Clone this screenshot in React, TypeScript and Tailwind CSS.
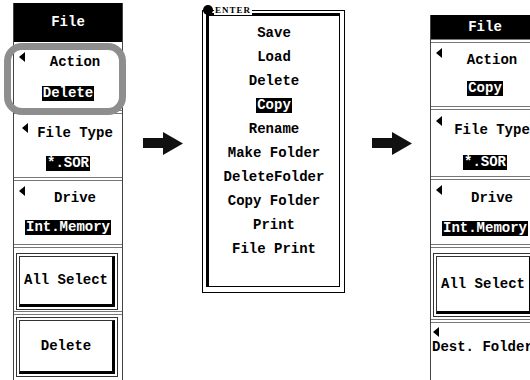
const mono = "font-['Liberation_Mono',monospace] font-bold text-[14px] text-black";

const Tri = ({ className }: { className: string }) => (
  <svg width="6" height="10" viewBox="0 0 6 10" className={`absolute ${className}`}>
    <polygon points="6,0 0,5 6,10" fill="#000" />
  </svg>
);

const Sep = () => <div className="h-[4px] shrink-0 border-y border-[#777]" />;

const Value = ({ text }: { text: string }) => (
  <div className="flex justify-center">
    <span className="bg-black text-white px-[1px] leading-[15px]">{text}</span>
  </div>
);

const Arrow = ({ className }: { className: string }) => (
  <svg width="40" height="23" viewBox="0 0 40 23" className={`shrink-0 ${className}`}>
    <rect x="0" y="6" width="21" height="10" fill="#111" />
    <polygon points="20,0 40,11.5 20,23" fill="#111" />
  </svg>
);

const BevelButton = ({ label, className }: { label: string; className: string }) => (
  <div className={`border border-[#333] p-[2px] flex ${className}`}>
    <div className="flex-1 flex items-center justify-center border-t border-l border-[#333] border-r-[3px] border-b-[3px] border-r-black border-b-black">
      {label}
    </div>
  </div>
);

const LeftPanel = () => (
  <div className="ml-[13px] mt-[3px] w-[110px] h-[377px] shrink-0 flex flex-col border-x border-[#444]">
    <div className="h-[39px] shrink-0 bg-black text-white flex items-center justify-center">File</div>
    <div className="relative h-[68px] shrink-0">
      <Tri className="left-[5px] top-[10px]" />
      <div className="pt-[11px] pl-[14px] text-center leading-[18px]">Action</div>
      <div className="mt-[15px]"><Value text="Delete" /></div>
    </div>
    <Sep />
    <div className="relative h-[63px] shrink-0">
      <Tri className="left-[8px] top-[9px]" />
      <div className="pt-[10px] pl-[14px] text-center leading-[18px] whitespace-nowrap">File Type</div>
      <div className="mt-[14px]"><Value text="*.SOR" /></div>
    </div>
    <Sep />
    <div className="relative h-[63px] shrink-0">
      <Tri className="left-[5px] top-[5px]" />
      <div className="pt-[8px] pl-[14px] text-center leading-[18px]">Drive</div>
      <div className="mt-[13px]"><Value text="Int.Memory" /></div>
    </div>
    <Sep />
    <div className="h-[63px] shrink-0 pt-[5px] pb-[1px] pl-[2px] pr-[4px] flex">
      <BevelButton label="All Select" className="flex-1" />
    </div>
    <Sep />
    <div className="flex-1 pt-[2px] pl-[2px] pr-[4px] flex">
      <BevelButton label="Delete" className="flex-1 h-[60px]" />
    </div>
  </div>
);

const Popup = () => (
  <div className="ml-[19px] mt-[10px] w-[143px] h-[283px] shrink-0 border border-black pt-[2px] pl-[3px] pr-[4px] pb-[5px] flex">
    <div className="flex-1 border-l-[3px] border-t-[3px] border-r border-b border-black pt-[5px] flex flex-col items-center leading-[24px]">
      <span>Save</span>
      <span>Load</span>
      <span>Delete</span>
      <span className="bg-black text-white px-[1px] leading-[15px] my-[4.5px]">Copy</span>
      <span>Rename</span>
      <span className="whitespace-nowrap">Make Folder</span>
      <span className="whitespace-nowrap">DeleteFolder</span>
      <span className="whitespace-nowrap">Copy Folder</span>
      <span>Print</span>
      <span className="whitespace-nowrap">File Print</span>
    </div>
  </div>
);

const RightPanel = () => (
  <div className="ml-[18px] mt-[15px] w-[110px] h-[365px] shrink-0 flex flex-col border-x border-[#444]">
    <div className="h-[24px] shrink-0 bg-black text-white flex items-center justify-center">File</div>
    <Sep />
    <div className="relative h-[63px] shrink-0">
      <Tri className="left-[5px] top-[5px]" />
      <div className="pt-[8px] pl-[14px] text-center leading-[18px]">Action</div>
      <div className="mt-[12px]"><Value text="Copy" /></div>
    </div>
    <Sep />
    <div className="relative h-[66px] shrink-0">
      <Tri className="left-[5px] top-[6px]" />
      <div className="pt-[11px] pl-[14px] text-center leading-[18px] whitespace-nowrap">File Type</div>
      <div className="mt-[16px]"><Value text="*.SOR" /></div>
    </div>
    <Sep />
    <div className="relative h-[64px] shrink-0">
      <Tri className="left-[5px] top-[5px]" />
      <div className="pt-[9px] pl-[14px] text-center leading-[18px]">Drive</div>
      <div className="mt-[14px]"><Value text="Int.Memory" /></div>
    </div>
    <Sep />
    <div className="h-[71px] shrink-0 pt-[5px] pb-[2px] pl-[2px] pr-[4px] flex">
      <BevelButton label="All Select" className="flex-1" />
    </div>
    <Sep />
    <div className="relative flex-1">
      <Tri className="left-[2px] top-[4px]" />
      <div className="pt-[15px] pl-[1px] leading-[18px] whitespace-nowrap">Dest. Folder</div>
    </div>
  </div>
);

export default function App() {
  return (
    <div className={`relative w-[530px] h-[380px] overflow-hidden bg-white ${mono}`}>
      <div className="flex items-start">
        <LeftPanel />
        <Arrow className="ml-[20px] mt-[132px]" />
        <Popup />
        <Arrow className="ml-[27px] mt-[132px]" />
        <RightPanel />
      </div>
      {/* highlight ring around the Action key */}
      <div className="absolute left-[4px] top-[43px] w-[122px] h-[72px] border-[7px] border-[#8e8e8e] rounded-[18px]" />
      {/* ENTER label on the popup frame */}
      <div className="absolute left-[203px] top-[5px] flex items-center gap-[1px]">
        <div className="w-[10px] h-[10px] rounded-full bg-black" />
        <span className="bg-white px-[1px] text-[9px] leading-[9px] tracking-[1px] font-['Liberation_Serif',serif]">ENTER</span>
      </div>
    </div>
  );
}
